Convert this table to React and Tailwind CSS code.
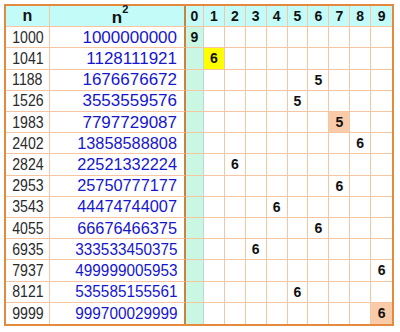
import React from 'react'

const rows = [
  { n: '1000', sq: '1000000000', col: 0, digit: 9, mark: '' },
  { n: '1041', sq: '1128111921', col: 1, digit: 6, mark: 'yellow' },
  { n: '1188', sq: '1676676672', col: 6, digit: 5, mark: '' },
  { n: '1526', sq: '3553559576', col: 5, digit: 5, mark: '' },
  { n: '1983', sq: '7797729087', col: 7, digit: 5, mark: 'peach' },
  { n: '2402', sq: '13858588808', col: 8, digit: 6, mark: '' },
  { n: '2824', sq: '22521332224', col: 2, digit: 6, mark: '' },
  { n: '2953', sq: '25750777177', col: 7, digit: 6, mark: '' },
  { n: '3543', sq: '44474744007', col: 4, digit: 6, mark: '' },
  { n: '4055', sq: '66676466375', col: 6, digit: 6, mark: '' },
  { n: '6935', sq: '333533450375', col: 3, digit: 6, mark: '' },
  { n: '7937', sq: '499999005953', col: 9, digit: 6, mark: '' },
  { n: '8121', sq: '535585155561', col: 5, digit: 6, mark: '' },
  { n: '9999', sq: '999700029999', col: 9, digit: 6, mark: 'peach' },
]

const squeeze = {
  10: 'scale-x-100',
  11: 'scale-x-[0.96]',
  12: 'scale-x-[0.9]',
}

const digits = [0, 1, 2, 3, 4, 5, 6, 7, 8, 9]

function Cell({ children, className = '' }) {
  return (
    <div className={'flex items-center min-h-0 leading-none border-[#f6c6a3] ' + className}>
      {children}
    </div>
  )
}

export default function App() {
  return (
    <div className="bg-white w-[400px] h-[332px] pt-[4px] pl-[4px]" style={{ fontFamily: '"Liberation Sans", Arial, sans-serif' }}>
      <div className="w-[390px] h-[322px] border-2 border-[#e38a3f] grid grid-cols-[44px_136px_18px_repeat(9,minmax(0,1fr))] grid-rows-[repeat(15,minmax(0,1fr))]">
        {/* header */}
        <Cell className="justify-center bg-[#c2fbf8] border-r border-b font-bold text-[16px] text-[#111]">n</Cell>
        <Cell className="justify-center bg-[#c2fbf8] border-r-2 border-r-[#c9823f] border-b font-bold text-[17px] text-[#111]">
          <span className="relative pt-[2px]">n<span className="text-[11px] absolute -top-[3px] left-full">2</span></span>
        </Cell>
        {digits.map((d) => (
          <Cell key={d} className={'justify-center bg-[#c2fbf8] border-b font-bold text-[14px] text-[#111] ' + (d < 9 ? 'border-r' : '')}>
            {d}
          </Cell>
        ))}

        {rows.map((r, i) => {
          const last = i === rows.length - 1
          const bb = last ? '' : 'border-b'
          return (
            <React.Fragment key={r.n}>
              <Cell className={'justify-center border-r text-[#2a2a2a] text-[17px] ' + bb}>
                <span className="inline-block scale-x-[0.83]">{r.n}</span>
              </Cell>
              <Cell className={'justify-end pr-[7px] border-r-2 border-r-[#c9823f] text-[#1616cf] text-[17px] ' + bb}>
                <span className={'inline-block origin-right ' + squeeze[r.sq.length]}>{r.sq}</span>
              </Cell>
              {digits.map((d) => {
                let bg = d === 0 ? 'bg-[#c9f7e3] border-r-[#bfd9cc]' : 'bg-white'
                if (d === r.col && r.mark === 'yellow') bg = 'bg-[#ffff00]'
                if (d === r.col && r.mark === 'peach') bg = 'bg-[#f9cba8]'
                return (
                  <Cell key={d} className={'justify-center font-bold text-[14px] text-[#111] ' + bg + ' ' + bb + (d < 9 ? ' border-r' : '')}>
                    {d === r.col ? r.digit : ''}
                  </Cell>
                )
              })}
            </React.Fragment>
          )
        })}
      </div>
    </div>
  )
}
